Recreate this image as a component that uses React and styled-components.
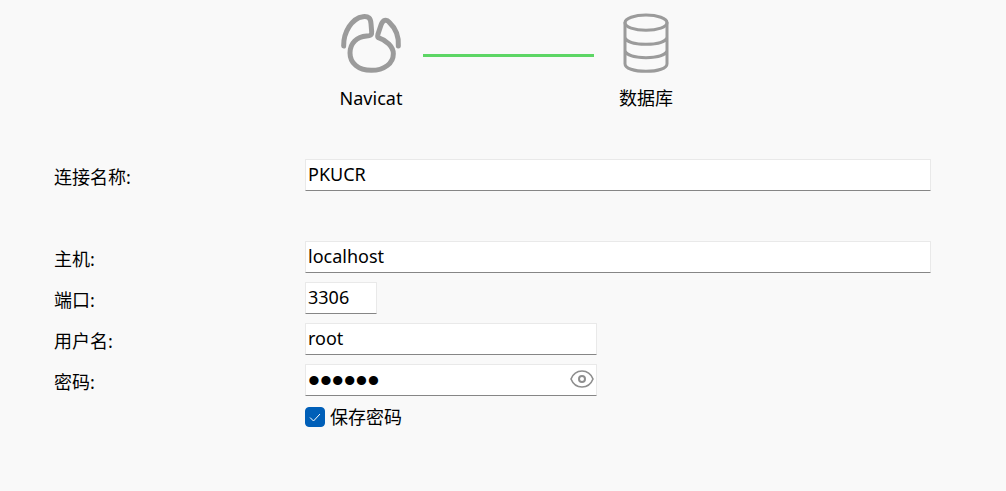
import React, { useState } from "react";
import styled, { createGlobalStyle } from "styled-components";

const GlobalStyle = createGlobalStyle`
  * { box-sizing: border-box; }
  body {
    margin: 0;
    background: #f9f9f9;
    color: #000;
    font: 18px/24px "Noto Sans", "Noto Sans CJK SC", sans-serif;
  }
`;

const Page = styled.main`
  padding: 12px 75px 60px 54px;
`;

const Diagram = styled.header`
  display: flex;
  justify-content: center;
  gap: 19px;
  padding-left: 32px;
`;

const Node = styled.div`
  display: flex;
  flex-direction: column;
  align-items: center;
  gap: 10px;
  width: 66px;
  white-space: nowrap;

  svg {
    width: 64px;
    height: 64px;
    fill: none;
    stroke: #9b9b9b;
    stroke-linecap: round;
    stroke-linejoin: round;
  }
`;

const Link = styled.div`
  width: 171px;
  height: 3px;
  margin-top: 42px;
  background: #5dd665;
`;

const Form = styled.form`
  display: flex;
  flex-direction: column;
  gap: 9px;
  margin-top: 49px;
`;

const Row = styled.div`
  display: grid;
  grid-template-columns: 251px 1fr;
  margin-bottom: ${(p) => (p.$spaced ? "41px" : "0")};
`;

const Label = styled.label`
  padding-top: 6px;
`;

const Field = styled.div`
  display: flex;
  align-items: center;
  width: ${(p) => p.$width || "100%"};
  height: 32px;
  background: #fff;
  border: 1px solid #e9e9e9;
  border-bottom-color: #868686;
  border-radius: 1px;
`;

const Input = styled.input`
  flex: 1;
  min-width: 0;
  height: 30px;
  padding: 0 2px 2px;
  border: 0;
  outline: 0;
  background: transparent;
  color: inherit;
  font: inherit;

  &[type="password"] {
    padding: 0 2px;
    font: 34px "Liberation Sans", sans-serif;
  }
`;

const EyeButton = styled.button`
  display: flex;
  padding: 0 0 2px;
  margin-right: 1px;
  border: 0;
  background: none;

  svg {
    width: 26px;
    height: 26px;
    fill: none;
    stroke: #8e8e8e;
  }
`;

const CheckLabel = styled.label`
  display: flex;
  align-items: center;
  gap: 5px;
  grid-column: 2;
  width: max-content;
`;

const CheckBox = styled.span`
  display: grid;
  width: 20px;
  height: 20px;

  > * {
    grid-area: 1 / 1;
  }

  svg {
    width: 20px;
    height: 20px;
    fill: none;
    stroke: #fff;
    pointer-events: none;
  }
`;

const Check = styled.input`
  appearance: none;
  width: 20px;
  height: 20px;
  margin: 0;
  border: 1px solid #005fb8;
  border-radius: 4px;

  &:checked {
    background: #005fb8;
  }
`;

const NavicatIcon = () => (
  <svg viewBox="27 21 192 192" strokeWidth="15" aria-hidden="true">
    <path d="M41 123C40 82 66 39 99 35C116 33 122 40 123 56L125 80C126 90 121 93 110 93C81 95 60 114 60 144C60 174 84 196 124 196C163 196 190 175 190 146C190 124 169 106 145 98C142 96 143 91 144 87L153 60C158 45 169 41 178 52C194 67 207 91 205 123" />
  </svg>
);

const DatabaseIcon = () => (
  <svg viewBox="104 21 192 192" strokeWidth="9" aria-hidden="true">
    <ellipse cx="200" cy="53" rx="63" ry="23" />
    <path d="M137 53V176C137 190 164 199 200 199S263 190 263 176V53M137 97C141 111 168 118 200 118S259 111 263 97M137 137C141 151 168 158 200 158S259 151 263 137" />
  </svg>
);

const EyeIcon = () => (
  <svg viewBox="0 0 26 26" strokeWidth="2" aria-hidden="true">
    <path d="M2 13C4 8 8 5 13 5S22 8 24 13C22 18 18 21 13 21S4 18 2 13Z" strokeWidth="1.6" />
    <circle cx="13" cy="13" r="3" />
  </svg>
);

const fields = [
  { id: "name", label: "连接名称:", value: "PKUCR", spaced: true },
  { id: "host", label: "主机:", value: "localhost" },
  { id: "port", label: "端口:", value: "3306", width: "72px" },
  { id: "user", label: "用户名:", value: "root", width: "292px" },
];

export default function App() {
  const [visible, setVisible] = useState(false);

  return (
    <>
      <GlobalStyle />
      <Page>
        <Diagram>
          <Node>
            <NavicatIcon />
            <span>Navicat</span>
          </Node>
          <Link />
          <Node>
            <DatabaseIcon />
            <span>数据库</span>
          </Node>
        </Diagram>
        <Form>
          {fields.map((f) => (
            <Row key={f.id} $spaced={f.spaced}>
              <Label htmlFor={f.id}>{f.label}</Label>
              <Field $width={f.width}>
                <Input id={f.id} type="text" defaultValue={f.value} />
              </Field>
            </Row>
          ))}
          <Row>
            <Label htmlFor="password">密码:</Label>
            <Field $width="292px">
              <Input
                id="password"
                type={visible ? "text" : "password"}
                defaultValue="secret"
              />
              <EyeButton
                type="button"
                aria-label="显示密码"
                onClick={() => setVisible(!visible)}
              >
                <EyeIcon />
              </EyeButton>
            </Field>
          </Row>
          <Row>
            <CheckLabel>
              <CheckBox>
                <Check type="checkbox" defaultChecked />
                <svg viewBox="0 0 20 20" aria-hidden="true">
                  <path d="M5 10.500L8.500 14L15 7" />
                </svg>
              </CheckBox>
              保存密码
            </CheckLabel>
          </Row>
        </Form>
      </Page>
    </>
  );
}
